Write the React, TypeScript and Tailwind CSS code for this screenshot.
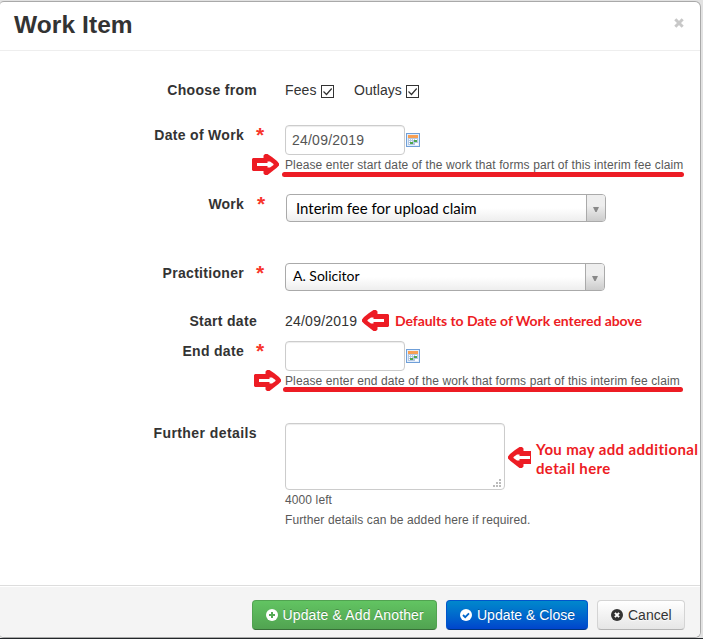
import React from "react";
import clsx from "clsx";

const Asterisk = ({ className }: { className?: string }) => (
  <span
    className={clsx(
      "absolute top-0 text-[21px] leading-[20px] font-bold text-[#f8352b]",
      className,
    )}
  >
    *
  </span>
);

const Arrow = ({
  className,
  left,
  short,
}: {
  className: string;
  left?: boolean;
  short?: boolean;
}) => (
  <svg
    className={clsx("absolute h-[21px]", className, left && "-scale-x-100")}
    viewBox={short ? "4 0 23 21" : "0 0 27 21"}
    width={short ? 23 : 27}
    height={21}
  >
    <path
      d="M1 4h10.5V1.5L13 0h2.5l4.5 3 5 4 2 2.5v2L24.500 14 20 17.500 15.500 21H13l-1.500-1.500V17H1l-1-1V5z"
      fill="#ed1c24"
    />
    <path d="M5 9h10.500V7.500H18L21.500 10v1L18 13.500h-2.500V12H5z" fill="#fff" />
  </svg>
);

const CheckBox = () => (
  <svg width="13" height="13" viewBox="0 0 13 13" className="mt-[5px]">
    <rect x=".5" y=".5" width="12" height="12" fill="#fff" stroke="#333" />
    <path d="M2.5 6.5l3 3 5.2-6" fill="none" stroke="#333" strokeWidth="1.2" />
  </svg>
);

const CalendarIcon = () => (
  <svg width="14" height="14" viewBox="0 0 14 14" className="mt-2 ml-px">
    <rect x=".5" y=".5" width="13" height="13" fill="#e3eefb" stroke="#6f9fd8" />
    <rect x="2" y="2" width="10" height="3" fill="#f7a054" />
    <rect x="2" y="5" width="10" height="7" fill="#b4c8e2" />
    <path
      d="M3 6h1v1H3zM5 6h1v1H5zM7 6h1v1H7zM9 6h2v1H9zM3 8h1v1H3zM5 8h1v1H5zM9 10h3v2H9zM3 10h1v1H3z"
      fill="#fff"
    />
    <path d="M8 7h3v2H8zM4 9h3v2H4z" fill="#4fa84f" />
  </svg>
);

const Row = ({
  label,
  required,
  className,
  labelClassName = "tracking-[0.3px]",
  markClassName = "left-[256px]",
  children,
}: {
  label: string;
  required?: boolean;
  className?: string;
  labelClassName?: string;
  markClassName?: string;
  children: React.ReactNode;
}) => (
  <div className={clsx("relative flex", className)}>
    <div
      className={clsx(
        "w-[257px] shrink-0 text-right font-bold",
        labelClassName,
        required && "pr-[13px]",
      )}
    >
      {label}
      {required && <Asterisk className={markClassName} />}
    </div>
    <div className="ml-7">{children}</div>
  </div>
);

const DateField = ({ value }: { value: string }) => (
  <div className="flex">
    <div className="h-[30px] w-[120px] rounded-[4px] border border-[#ccc] px-1.5 leading-[29px] tracking-[0.22px] text-[#555] shadow-[inset_0_1px_1px_rgba(0,0,0,0.075)]">
      {value}
    </div>
    <CalendarIcon />
  </div>
);

const Select = ({ children }: { children: React.ReactNode }) => (
  <div className="flex h-7 w-80 overflow-hidden rounded-[4px] border border-[#aaa] bg-linear-to-b from-white from-50% to-[#eee] font-['Lato','Liberation_Sans',sans-serif] text-black">
    <div className="flex-1">{children}</div>
    <div className="flex w-[19px] items-center justify-center border-l border-[#aaa] bg-linear-to-b from-[#eee] from-40% to-[#ccc]">
      <svg width="6" height="5" viewBox="0 0 6 5" className="mt-0.5 mr-px">
        <path d="M0 0h6L3.6 5H2.4z" fill="#888" />
      </svg>
    </div>
  </div>
);

const Help = ({ children }: { children: React.ReactNode }) => (
  <p className="text-[12px] leading-5 tracking-[0.115px] whitespace-nowrap text-[#595959]">
    {children}
  </p>
);

const App = () => {
  return (
    <div className="h-[639px] w-[705px] overflow-hidden bg-white font-['Liberation_Sans',sans-serif] text-[14px] leading-5 text-[#333]">
      <div className="flex h-[639px] w-[703px] flex-col border-b border-[#22262a] bg-[#e2e2e2]">
        <div className="relative mt-px flex h-[637px] w-[701px] flex-col overflow-hidden rounded-[6px] rounded-l-[4px] border-t border-r border-b border-[#a9a9a9] bg-white">
          <header className="flex h-[49px] justify-between border-b border-[#eee] pr-4 pl-[14px]">
            <h3 className="mt-[3px] text-[24.5px] leading-10 font-bold tracking-[0.08px]">
              Work Item
            </h3>
            <svg width="10" height="10" viewBox="0 0 10 10" className="mt-4">
              <path
                d="M1.3 1.3l7.4 7.4M8.7 1.3L1.3 8.7"
                stroke="#c8c8c8"
                strokeWidth="3"
              />
            </svg>
          </header>

          <main className="h-[534px] pt-[29px]">
            <Row label="Choose from" className="h-[45px]">
              <div className="flex">
                <span className="w-9 tracking-[0.1px]">Fees</span>
                <CheckBox />
                <span className="ml-5 w-[52px] tracking-[0.05px]">Outlays</span>
                <CheckBox />
              </div>
            </Row>

            <Row label="Date of Work" required className="h-[69px]">
              <DateField value="24/09/2019" />
              <Help>
                Please enter start date of the work that forms part of this
                interim fee claim
              </Help>
              <Arrow className="top-[29px] left-[252px]" />
              <div className="absolute top-[47px] left-[282px] h-[5px] w-[402px] rounded-full bg-[#ed1c24]" />
            </Row>

            <Row
              label="Work"
              required
              className="h-[69px]"
              labelClassName="tracking-[0.2px]"
              markClassName="left-[257px]"
            >
              <div className="ml-px">
                <Select>
                  <span className="ml-[9px] text-[15px] leading-[27px]">
                    Interim fee for upload claim
                  </span>
                </Select>
              </div>
            </Row>

            <Row label="Practitioner" required className="h-12">
              <Select>
                <span className="ml-[7px] text-[14px] leading-[24px]">
                  A. Solicitor
                </span>
              </Select>
            </Row>

            <Row label="Start date" className="h-[30px]">
              <span className="tracking-[0.22px]">24/09/2019</span>
              <Arrow left className="-top-px left-[362px]" />
              <span className="absolute top-0 left-[395px] font-['Lato','Liberation_Sans',sans-serif] text-[14px] font-bold tracking-[-0.07px] whitespace-nowrap text-[#ed1c24]">
                Defaults to Date of Work entered above
              </span>
            </Row>

            <Row label="End date" required className="h-[82px]">
              <DateField value="" />
              <Help>
                Please enter end date of the work that forms part of this
                interim fee claim
              </Help>
              <Arrow className="top-[29px] left-[254px]" />
              <div className="absolute top-[46px] left-[283px] h-[5px] w-[400px] rounded-full bg-[#ed1c24]" />
            </Row>

            <Row label="Further details" labelClassName="tracking-[0.42px]">
              <div className="relative h-[67px] w-[220px] rounded-[4px] border border-[#ccc] shadow-[inset_0_1px_1px_rgba(0,0,0,0.075)]">
                <svg
                  width="8"
                  height="8"
                  viewBox="0 0 8 8"
                  className="absolute right-[3px] bottom-[2px]"
                >
                  <path
                    d="M6 0h2v2H6zM3 3h2v2H3zM6 3h2v2H6zM0 6h2v2H0zM3 6h2v2H3zM6 6h2v2H6z"
                    fill="#bbb"
                  />
                </svg>
              </div>
              <Help>4000 left</Help>
              <Help>Further details can be added here if required.</Help>
              <Arrow left short className="top-6 left-[508px]" />
              <p className="absolute top-[17px] left-[536px] font-['Lato','Liberation_Sans',sans-serif] text-[15px] leading-[19px] font-bold tracking-[0.36px] whitespace-nowrap text-[#ed1c24]">
                You may add additional
                <br />
                detail here
              </p>
            </Row>
          </main>

          <footer className="flex flex-1 justify-end border-t border-[#ddd] bg-[#f4f4f4] pt-3.5 pr-[15px] shadow-[inset_0_1px_0_#fff]">
            <button className="flex h-[30px] w-[185px] items-center rounded-[4px] border border-[#51a351] border-b-[#387038] bg-linear-to-b from-[#62c462] to-[#51a351] pl-[13px] text-white [text-shadow:0_-1px_0_rgba(0,0,0,0.25)]">
              <svg width="12" height="12" viewBox="0 0 12 12">
                <circle cx="6" cy="6" r="6" fill="#fff" />
                <path d="M6 3v6M3 6h6" stroke="#55aa55" strokeWidth="2" />
              </svg>
              <span className="ml-[4.5px] tracking-[0.14px]">
                Update &amp; Add Another
              </span>
            </button>
            <button className="ml-[9px] flex h-[30px] w-[142px] items-center rounded-[4px] border border-[#0055cc] border-b-[#003580] bg-linear-to-b from-[#0088cc] to-[#0044cc] pl-[13px] text-white [text-shadow:0_-1px_0_rgba(0,0,0,0.25)]">
              <svg width="12" height="12" viewBox="0 0 12 12">
                <circle cx="6" cy="6" r="6" fill="#fff" />
                <path
                  d="M3 6l2.2 2.2L9 4.4"
                  fill="none"
                  stroke="#0066cc"
                  strokeWidth="1.8"
                />
              </svg>
              <span className="ml-[5px]">Update &amp; Close</span>
            </button>
            <button className="ml-[9px] flex h-[30px] w-[88px] items-center rounded-[4px] border border-[#d4d4d4] border-b-[#b3b3b3] bg-linear-to-b from-white to-[#e6e6e6] pl-[13px] [text-shadow:0_1px_1px_rgba(255,255,255,0.75)]">
              <svg width="12" height="12" viewBox="0 0 12 12">
                <circle cx="6" cy="6" r="6" fill="#333" />
                <path
                  d="M3.9 3.9l4.2 4.2M8.1 3.9L3.9 8.1"
                  stroke="#fff"
                  strokeWidth="2"
                />
              </svg>
              <span className="ml-[5px]">Cancel</span>
            </button>
          </footer>
        </div>
      </div>
    </div>
  );
};

export default App;
